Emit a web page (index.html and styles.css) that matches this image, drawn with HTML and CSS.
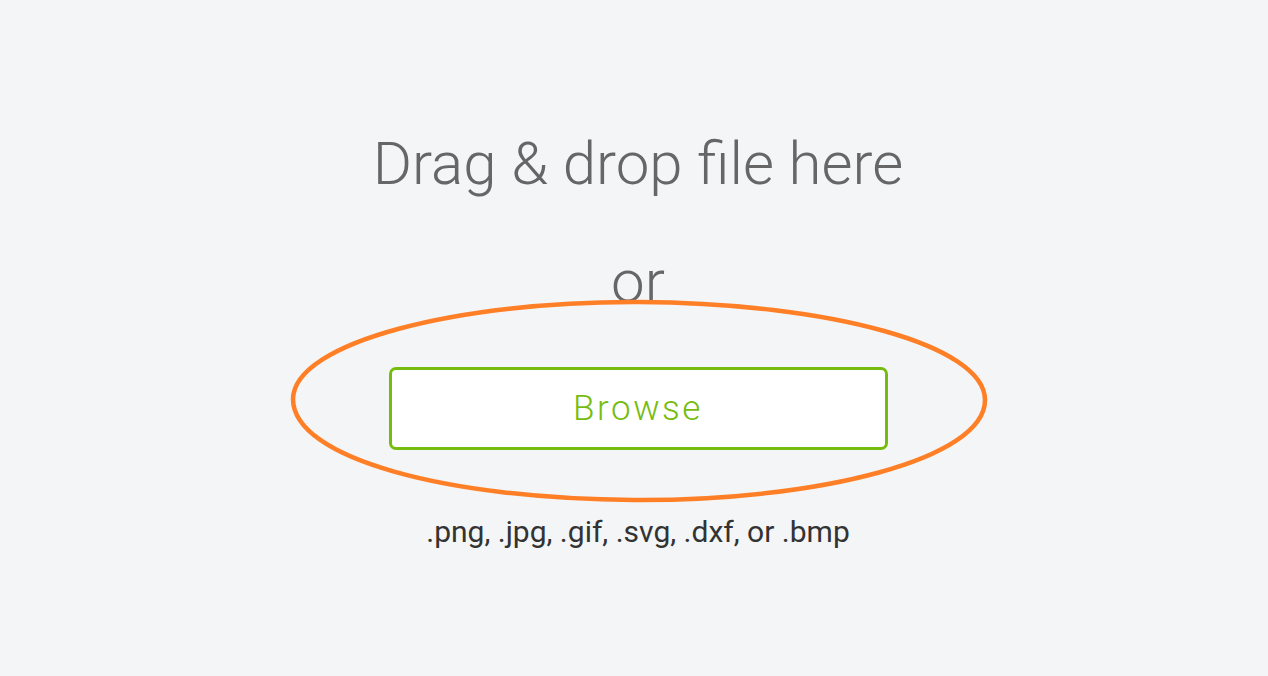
FILE: index.html
```html
<!DOCTYPE html>
<html lang="en">
<head>
  <meta charset="UTF-8">
  <title>Upload</title>
  <link rel="stylesheet" href="styles.css">
</head>
<body>
<div class="drop-zone">
  <h1 class="drop-title">Drag &amp; drop file here</h1>
  <p class="drop-or">or</p>
  <div class="browse-wrap">
    <button class="browse-btn">Browse</button>
    <svg class="highlight" width="700" height="206" viewBox="0 0 700 206">
      <path d="M350 3 C540 4 696 46 696 101 C696 160 530 202 345 201 C160 200 4 160 4 100 C5 43 170 2 350 3 Z"
            fill="none" stroke="#ff7f27" stroke-width="4.5"/>
    </svg>
  </div>
  <p class="drop-types">.png, .jpg, .gif, .svg, .dxf, or .bmp</p>
</div>
</body>
</html>
```

FILE: styles.css
```css
body {
  margin: 0;
  padding: 0 0 0 8px;
  font-family: Roboto, "Liberation Sans", sans-serif;
  background-color: #f4f5f7;
  height: 676px;
  overflow: hidden;
}

.drop-zone {
  display: flex;
  flex-direction: column;
  align-items: center;
  padding-top: 128px;
}

.drop-title,
.drop-or {
  margin: 0;
  font-size: 60px;
  font-weight: 300;
  line-height: 72px;
  color: #666666;
}

.drop-or {
  margin-top: 46px;
}

.browse-wrap {
  position: relative;
  margin-top: 49px;
}

.browse-btn {
  display: block;
  width: 499px;
  height: 83px;
  background: white;
  border: 3px solid #76bc0f;
  border-radius: 7px;
  font-family: Roboto, "Liberation Sans", sans-serif;
  font-size: 35px;
  font-weight: 300;
  letter-spacing: 2.5px;
  color: #76bc0f;
  padding: 0;
}

.highlight {
  position: absolute;
  left: -100px;
  top: -68px;
  pointer-events: none;
}

.drop-types {
  margin: 0;
  margin-top: 64px;
  font-size: 30px;
  color: #333333;
}
```
